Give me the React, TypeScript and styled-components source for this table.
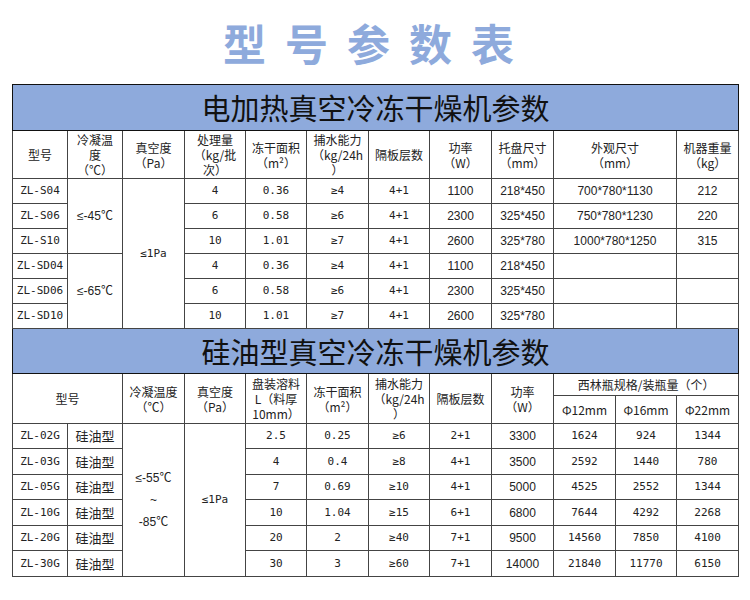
import styled, { createGlobalStyle } from 'styled-components'

const GlobalStyle = createGlobalStyle`
  html, body {
    margin: 0;
    padding: 0;
    background: #fff;
  }
  body {
    font-family: 'Noto Sans CJK SC', sans-serif;
    color: #222;
  }
`

const Page = styled.div`
  width: 750px;
  height: 600px;
  padding: 0 12px;
  box-sizing: border-box;
`

const Heading = styled.h1`
  margin: 0;
  height: 84px;
  display: flex;
  align-items: center;
  justify-content: center;
  padding-left: 6px;
  box-sizing: border-box;
  font-family: 'Noto Sans CJK SC', sans-serif;
  font-size: 43px;
  font-weight: 700;
  letter-spacing: 19px;
  color: #8eaadc;
`

const Sheet = styled.table`
  width: 726px;
  border-collapse: collapse;
  table-layout: fixed;
  border: 1px solid #111;
`

const Col = styled.col<{ $w: number }>`
  width: ${(p) => p.$w}px;
`

const Row = styled.tr<{ $h: number }>`
  height: ${(p) => p.$h}px;
`

const Band = styled.td`
  background: #8eaadc;
  border: 1px solid #111;
  padding: 0;
  text-align: center;
  font-family: 'Noto Sans CJK SC', sans-serif;
  font-size: 29px;
  line-height: 1;
  color: #111;
`

const Head = styled.th`
  border: 1px solid #444;
  padding: 0;
  text-align: center;
  vertical-align: middle;
  white-space: nowrap;
  font-family: 'Noto Sans CJK SC', sans-serif;
  font-size: 12px;
  font-weight: 400;
  line-height: 15px;
  color: #222;
`

type Face = 'mono' | 'sans' | 'cjk'

const faces: Record<Face, string> = {
  mono: "'DejaVu Sans Mono', 'Noto Sans CJK SC', monospace",
  sans: "'Liberation Sans', 'Noto Sans CJK SC', sans-serif",
  cjk: "'Noto Sans CJK SC', sans-serif",
}

const sizes: Record<Face, string> = {
  mono: '11px',
  sans: '12px',
  cjk: '13px',
}

const Cell = styled.td<{ $face?: Face }>`
  border: 1px solid #444;
  padding: 0;
  text-align: center;
  vertical-align: middle;
  white-space: nowrap;
  font-family: ${(p) => faces[p.$face ?? 'mono']};
  font-size: ${(p) => sizes[p.$face ?? 'mono']};
  line-height: 22px;
  color: #222;
`

const widths = [55, 55, 62, 61, 61, 62, 61, 62, 62, 62, 61, 62]

const heaterRows = [
  ['ZL-S04', '4', '0.36', '≥4', '4+1', '1100', '218*450', '700*780*1130', '212'],
  ['ZL-S06', '6', '0.58', '≥6', '4+1', '2300', '325*450', '750*780*1230', '220'],
  ['ZL-S10', '10', '1.01', '≥7', '4+1', '2600', '325*780', '1000*780*1250', '315'],
  ['ZL-SD04', '4', '0.36', '≥4', '4+1', '1100', '218*450', '', ''],
  ['ZL-SD06', '6', '0.58', '≥6', '4+1', '2300', '325*450', '', ''],
  ['ZL-SD10', '10', '1.01', '≥7', '4+1', '2600', '325*780', '', ''],
]

const oilRows = [
  ['ZL-02G', '2.5', '0.25', '≥6', '2+1', '3300', '1624', '924', '1344'],
  ['ZL-03G', '4', '0.4', '≥8', '4+1', '3500', '2592', '1440', '780'],
  ['ZL-05G', '7', '0.69', '≥10', '4+1', '5000', '4525', '2552', '1344'],
  ['ZL-10G', '10', '1.04', '≥15', '6+1', '6800', '7644', '4292', '2268'],
  ['ZL-20G', '20', '2', '≥40', '7+1', '9500', '14560', '7850', '4100'],
  ['ZL-30G', '30', '3', '≥60', '7+1', '14000', '21840', '11770', '6150'],
]

const oilHeights = [25, 26, 25, 26, 25, 26]

function HeaterSection() {
  return (
    <tbody>
      <Row $h={46}>
        <Band colSpan={12}>电加热真空冷冻干燥机参数</Band>
      </Row>
      <Row $h={48}>
        <Head>型号</Head>
        <Head>冷凝温<br />度<br />（℃）</Head>
        <Head>真空度<br />（Pa）</Head>
        <Head>处理量<br />（kg/批<br />次）</Head>
        <Head>冻干面积<br />（m²）</Head>
        <Head>捕水能力<br />（kg/24h<br />）</Head>
        <Head>隔板层数</Head>
        <Head>功率<br />（W）</Head>
        <Head>托盘尺寸<br />（mm）</Head>
        <Head colSpan={2}>外观尺寸<br />（mm）</Head>
        <Head>机器重量<br />（kg）</Head>
      </Row>
      {heaterRows.map(([model, load, area, water, shelf, power, tray, size, weight], i) => (
        <Row $h={25} key={model}>
          <Cell>{model}</Cell>
          {i % 3 === 0 && (
            <Cell rowSpan={3} $face="sans">{i === 0 ? '≤-45℃' : '≤-65℃'}</Cell>
          )}
          {i === 0 && <Cell rowSpan={6}>≤1Pa</Cell>}
          <Cell>{load}</Cell>
          <Cell>{area}</Cell>
          <Cell>{water}</Cell>
          <Cell>{shelf}</Cell>
          <Cell $face="sans">{power}</Cell>
          <Cell $face="sans">{tray}</Cell>
          <Cell colSpan={2} $face="sans">{size}</Cell>
          <Cell $face="sans">{weight}</Cell>
        </Row>
      ))}
    </tbody>
  )
}

function OilSection() {
  return (
    <tbody>
      <Row $h={45}>
        <Band colSpan={12}>硅油型真空冷冻干燥机参数</Band>
      </Row>
      <Row $h={22}>
        <Head colSpan={2} rowSpan={2}>型号</Head>
        <Head rowSpan={2}>冷凝温度<br />（℃）</Head>
        <Head rowSpan={2}>真空度<br />（Pa）</Head>
        <Head rowSpan={2}>盘装溶料<br />L（料厚<br />10mm）</Head>
        <Head rowSpan={2}>冻干面积<br />（m²）</Head>
        <Head rowSpan={2}>捕水能力<br />（kg/24h<br />）</Head>
        <Head rowSpan={2}>隔板层数</Head>
        <Head rowSpan={2}>功率<br />（W）</Head>
        <Head colSpan={3}>西林瓶规格/装瓶量（个）</Head>
      </Row>
      <Row $h={28}>
        <Head>Φ12mm</Head>
        <Head>Φ16mm</Head>
        <Head>Φ22mm</Head>
      </Row>
      {oilRows.map(([model, load, area, water, shelf, power, a, b, c], i) => (
        <Row $h={oilHeights[i]} key={model}>
          <Cell>{model}</Cell>
          <Cell $face="cjk">硅油型</Cell>
          {i === 0 && (
            <Cell rowSpan={6} $face="sans">≤-55℃<br />~<br />-85℃</Cell>
          )}
          {i === 0 && <Cell rowSpan={6}>≤1Pa</Cell>}
          <Cell>{load}</Cell>
          <Cell>{area}</Cell>
          <Cell>{water}</Cell>
          <Cell>{shelf}</Cell>
          <Cell $face="sans">{power}</Cell>
          <Cell>{a}</Cell>
          <Cell>{b}</Cell>
          <Cell>{c}</Cell>
        </Row>
      ))}
    </tbody>
  )
}

export default function App() {
  return (
    <>
      <GlobalStyle />
      <Page>
        <Heading>型号参数表</Heading>
        <Sheet>
          <colgroup>
            {widths.map((w, i) => (
              <Col $w={w} key={i} />
            ))}
          </colgroup>
          <HeaterSection />
          <OilSection />
        </Sheet>
      </Page>
    </>
  )
}
